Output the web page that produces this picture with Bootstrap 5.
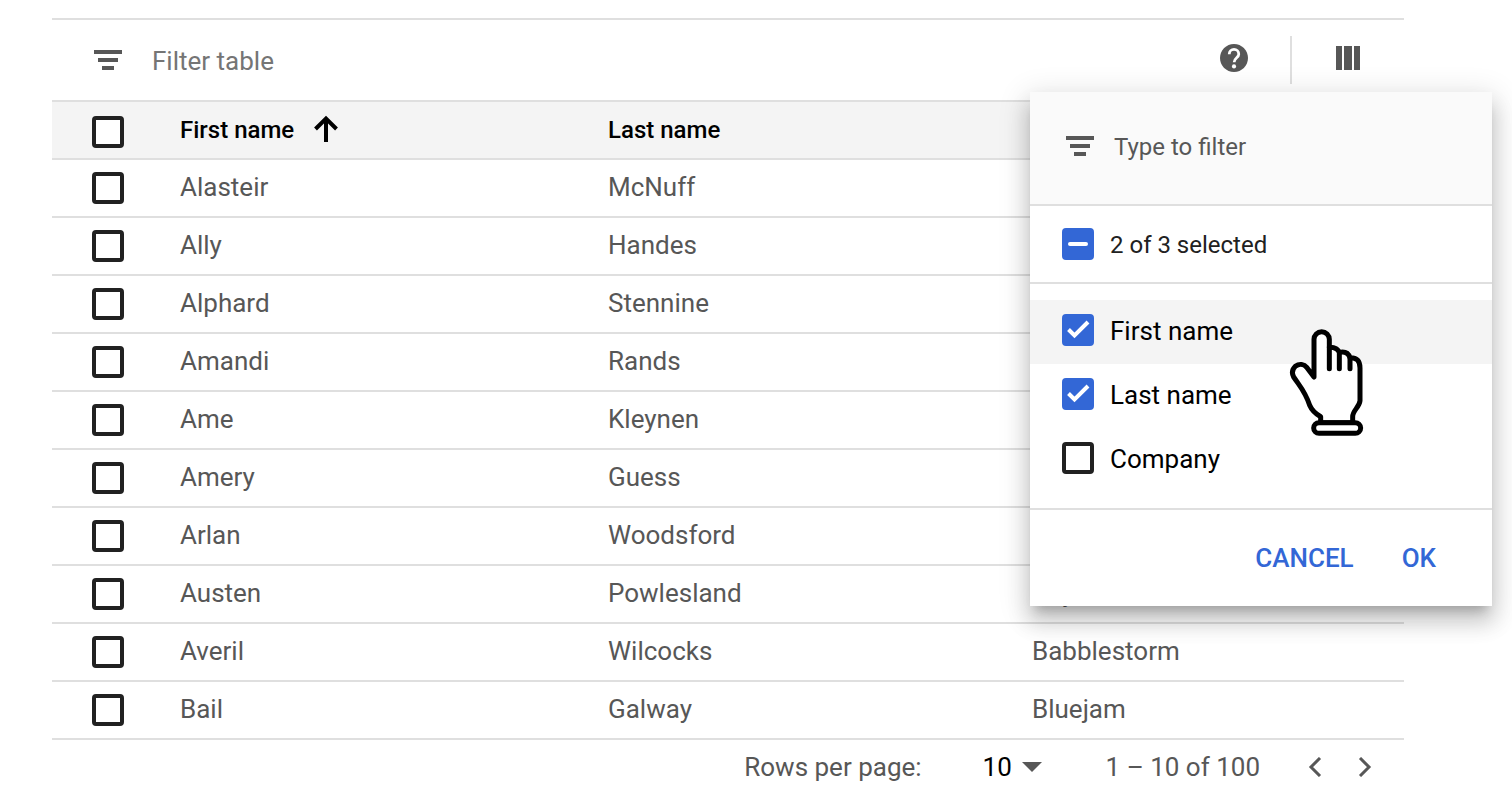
<!DOCTYPE html>
<html lang="en">
<head>
<meta charset="utf-8">
<meta name="viewport" content="width=device-width, initial-scale=1">
<title>People</title>
<link href="https://cdn.jsdelivr.net/npm/bootstrap@5.3.0/dist/css/bootstrap.min.css" rel="stylesheet">
<style>
  :root { --line: #dfdfdf; --ink: #575757; --blue: #3367d6; }
  body { font-family: Roboto, "Liberation Sans", sans-serif; font-size: 26px; line-height: 32px; color: var(--ink); background: #fff; }
  svg { display: block; flex: none; }
  .page { padding: 18px 108px 0 52px; }
  .toolbar { height: 82px; border-top: 2px solid var(--line); padding: 0 44px 0 42px; gap: 30px; }
  .plain-input { border: 0; background: transparent; padding: 2px 0 0; color: inherit; outline: 0; min-width: 0; }
  .plain-input::placeholder { color: #757575; opacity: 1; }
  .column-menu .plain-input::placeholder { color: var(--ink); }
  .icon-btn { border: 0; background: none; padding: 0; color: var(--ink); }
  .tool-actions { padding-bottom: 4px; }
  .rule { width: 2px; height: 48px; background: var(--line); margin: 4px 44px 0 42px; }

  .people { table-layout: fixed; border-top: 2px solid var(--line); border-collapse: separate; border-spacing: 0; }
  .people th, .people td { height: 58px; padding: 0 0 2px; border-bottom: 2px solid var(--line); vertical-align: middle; white-space: nowrap; }
  .people thead th { padding: 0; background: #f4f4f4; color: #000; font-size: 24px; font-weight: 500; }
  .people .pick { padding: 0 0 0 40px; }
  .people thead .pick { padding: 4px 0 0 40px; }
  .sort-arrow { margin-bottom: 2px; }
  .col-pick { width: 128px; }
  .col-first { width: 428px; }
  .col-last { width: 424px; }

  .form-check-input.box { width: 32px; height: 32px; margin: 0; border: 4px solid #212121; border-radius: 4px; background-color: #fff; display: block; flex: none; float: none; background-origin: border-box; background-size: 32px 32px; }
  .form-check-input.box:checked, .form-check-input.box:indeterminate { background-color: var(--blue); border-color: var(--blue); }
  .form-check-input.box:checked { background-image: url("data:image/svg+xml,%3Csvg xmlns='http://www.w3.org/2000/svg' viewBox='0 0 32 32'%3E%3Cpath d='M6.500 15.500l6 6L26 8' fill='none' stroke='%23fff' stroke-width='4'/%3E%3C/svg%3E"); }
  .form-check-input.box:indeterminate { background-image: url("data:image/svg+xml,%3Csvg xmlns='http://www.w3.org/2000/svg' viewBox='0 0 32 32'%3E%3Cpath d='M8 16h16' stroke='%23fff' stroke-width='4' stroke-linecap='round'/%3E%3C/svg%3E"); }

  .pager { height: 54px; padding-right: 32px; }
  .rows-select { appearance: none; border: 0; padding: 0; margin: 0 64px 0 61px; width: 59px; color: #000; background: url("data:image/svg+xml,%3Csvg xmlns='http://www.w3.org/2000/svg' viewBox='0 0 20 10'%3E%3Cpath d='M0 0h20L10 10z' fill='%23575757'/%3E%3C/svg%3E") no-repeat right center / 20px 10px; }
  .pager-nav { gap: 36px; margin-left: 48px; }

  .column-menu { top: 92px; right: 20px; width: 462px; z-index: 10; background: #fff; box-shadow: 0 10px 10px -6px rgba(0,0,0,.2), 0 16px 20px 2px rgba(0,0,0,.14), 0 6px 28px 4px rgba(0,0,0,.12); }
  .menu-filter { height: 114px; padding: 0 36px 4px; gap: 20px; font-size: 24px; background: #fafafa; border-bottom: 2px solid var(--line); }
  .menu-all { height: 78px; border-bottom: 2px solid var(--line); color: #212121; font-size: 24px; }
  .menu-row { padding: 0 32px; gap: 16px; }
  .menu-row span { padding-top: 2px; }
  .menu-list { padding: 16px 0; color: #000; border-bottom: 2px solid var(--line); }
  .menu-list .menu-row { height: 64px; padding-bottom: 4px; }
  .menu-list .hovered { background: #f4f4f4; }
  .menu-foot { height: 96px; padding: 0 56px; gap: 48px; }
  .menu-foot button { border: 0; background: none; padding: 0; font-weight: 500; color: var(--blue); }
  .hand { top: 235px; left: 258px; pointer-events: none; }
</style>
</head>
<body>
<main class="page position-relative">
  <div class="toolbar d-flex align-items-center">
    <svg width="28" height="20" fill="currentColor" aria-hidden="true"><path d="M0 0h28v4H0zM4 8h20v4H4zM8 16h12v4H8z"/></svg>
    <input class="plain-input flex-grow-1" type="text" placeholder="Filter table" aria-label="Filter table">
    <div class="tool-actions d-flex align-items-center">
      <button class="icon-btn" type="button" aria-label="Help">
        <svg width="28" height="28" viewBox="2 2 20 20" fill="currentColor"><path d="M12 2C6.480 2 2 6.480 2 12s4.480 10 10 10 10-4.480 10-10S17.520 2 12 2z"/><circle cx="12" cy="18" r="1.500" fill="#fff"/><path d="M8.600 9.300a3.400 3.400 0 0 1 6.800 0c0 2.500-3.300 2.600-3.300 5.700" fill="none" stroke="#fff" stroke-width="2"/></svg>
      </button>
      <div class="rule"></div>
      <button class="icon-btn" type="button" aria-label="Columns" aria-expanded="true">
        <svg width="24" height="24" fill="currentColor"><path d="M0 0h6v24H0zM8 0h8v24H8zM18 0h6v24h-6z"/></svg>
      </button>
    </div>
  </div>

  <table class="people w-100">
    <colgroup><col class="col-pick"><col class="col-first"><col class="col-last"><col></colgroup>
    <thead>
      <tr>
        <th class="pick"><input class="form-check-input box" type="checkbox" aria-label="Select all rows"></th>
        <th scope="col"><span class="d-flex align-items-center">First name
          <svg class="sort-arrow ms-3" width="32" height="28" viewBox="0 0 32 28" fill="none" stroke="#000" stroke-width="4" aria-hidden="true"><path d="M16 27V3M5.500 14 16 3.500 26.500 14"/></svg></span></th>
        <th scope="col">Last name</th>
        <th scope="col" aria-label="Company"></th>
      </tr>
    </thead>
    <tbody>
      <tr><td class="pick"><input class="form-check-input box" type="checkbox" aria-label="Select Alasteir McNuff"></td><td>Alasteir</td><td>McNuff</td><td></td></tr>
      <tr><td class="pick"><input class="form-check-input box" type="checkbox" aria-label="Select Ally Handes"></td><td>Ally</td><td>Handes</td><td></td></tr>
      <tr><td class="pick"><input class="form-check-input box" type="checkbox" aria-label="Select Alphard Stennine"></td><td>Alphard</td><td>Stennine</td><td></td></tr>
      <tr><td class="pick"><input class="form-check-input box" type="checkbox" aria-label="Select Amandi Rands"></td><td>Amandi</td><td>Rands</td><td></td></tr>
      <tr><td class="pick"><input class="form-check-input box" type="checkbox" aria-label="Select Ame Kleynen"></td><td>Ame</td><td>Kleynen</td><td></td></tr>
      <tr><td class="pick"><input class="form-check-input box" type="checkbox" aria-label="Select Amery Guess"></td><td>Amery</td><td>Guess</td><td></td></tr>
      <tr><td class="pick"><input class="form-check-input box" type="checkbox" aria-label="Select Arlan Woodsford"></td><td>Arlan</td><td>Woodsford</td><td></td></tr>
      <tr><td class="pick"><input class="form-check-input box" type="checkbox" aria-label="Select Austen Powlesland"></td><td>Austen</td><td>Powlesland</td><td>Rhyzio</td></tr>
      <tr><td class="pick"><input class="form-check-input box" type="checkbox" aria-label="Select Averil Wilcocks"></td><td>Averil</td><td>Wilcocks</td><td>Babblestorm</td></tr>
      <tr><td class="pick"><input class="form-check-input box" type="checkbox" aria-label="Select Bail Galway"></td><td>Bail</td><td>Galway</td><td>Bluejam</td></tr>
    </tbody>
  </table>

  <div class="pager d-flex align-items-center justify-content-end">
    <label for="rows">Rows per page:</label>
    <select class="rows-select" id="rows"><option>10</option></select>
    <span>1 – 10 of 100</span>
    <div class="pager-nav d-flex">
      <button class="icon-btn" type="button" aria-label="Previous page"><svg width="14" height="20" fill="none" stroke="currentColor" stroke-width="3"><path d="M12 1 3 10l9 9"/></svg></button>
      <button class="icon-btn" type="button" aria-label="Next page"><svg width="14" height="20" fill="none" stroke="currentColor" stroke-width="3"><path d="m2 1 9 9-9 9"/></svg></button>
    </div>
  </div>

  <section class="column-menu position-absolute" aria-label="Choose columns">
    <div class="menu-filter d-flex align-items-center">
      <svg width="28" height="20" fill="currentColor" aria-hidden="true"><path d="M0 0h28v4H0zM4 8h20v4H4zM8 16h12v4H8z"/></svg>
      <input class="plain-input flex-grow-1" type="text" placeholder="Type to filter" aria-label="Type to filter">
    </div>
    <label class="menu-all menu-row d-flex align-items-center"><input class="form-check-input box" id="all" type="checkbox"><span>2 of 3 selected</span></label>
    <div class="menu-list">
      <label class="menu-row hovered d-flex align-items-center"><input class="form-check-input box" type="checkbox" checked><span>First name</span></label>
      <label class="menu-row d-flex align-items-center"><input class="form-check-input box" type="checkbox" checked><span>Last name</span></label>
      <label class="menu-row d-flex align-items-center"><input class="form-check-input box" type="checkbox"><span>Company</span></label>
    </div>
    <div class="menu-foot d-flex align-items-center justify-content-end">
      <button type="button">CANCEL</button>
      <button type="button">OK</button>
    </div>
    <svg class="hand position-absolute" width="76" height="110" viewBox="54 51 228 330" fill="#fff" stroke="#000" stroke-width="15" stroke-linecap="round" stroke-linejoin="round" aria-hidden="true">
      <path d="M152 338V320C140 313 128 307 119 286C106 245 92 232 71 201C64 188 68 177 76 169C88 160 102 162 111 173L132 201V88a23 23 0 0 1 46 0V112Q201 111 208 127Q233 122 240 143Q270 142 270 174V272C268 292 248 301 248 320V338z"/>
      <path d="M178 112V176M208 128V176M240 143V176" fill="none"/>
      <rect x="131" y="338" width="141" height="32" rx="16"/>
    </svg>
  </section>
</main>
<script src="https://cdn.jsdelivr.net/npm/bootstrap@5.3.0/dist/js/bootstrap.bundle.min.js"></script>
<script>document.getElementById('all').indeterminate = true;</script>
</body>
</html>
